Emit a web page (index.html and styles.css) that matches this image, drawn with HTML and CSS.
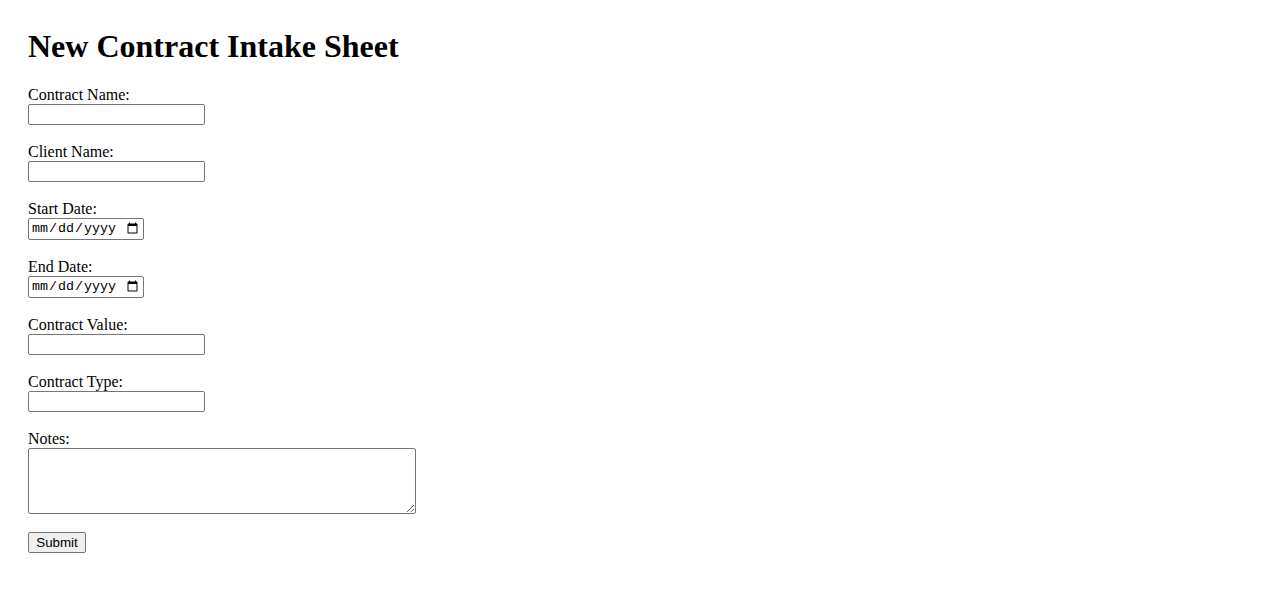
FILE: index.html
```html
<!DOCTYPE html>
<html lang="en">
<head>
<meta charset="utf-8">
<title>New Contract Intake Sheet</title>
<link rel="stylesheet" href="styles.css">
</head>
<body>
<div class="page">
<h1 class="title">New Contract Intake Sheet</h1>
<form class="intake">
<label class="lbl" for="cname">Contract Name:</label><br>
<input class="txt" type="text" id="cname"><br><br>
<label class="lbl" for="client">Client Name:</label><br>
<input class="txt" type="text" id="client"><br><br>
<label class="lbl" for="start">Start Date:</label><br>
<input class="date" type="date" id="start"><br><br>
<label class="lbl" for="end">End Date:</label><br>
<input class="date" type="date" id="end"><br><br>
<label class="lbl" for="value">Contract Value:</label><br>
<input class="txt" type="text" id="value"><br><br>
<label class="lbl" for="type">Contract Type:</label><br>
<input class="txt" type="text" id="type"><br><br>
<label class="lbl" for="notes">Notes:</label><br>
<textarea class="notes" id="notes"></textarea><br><br>
<button class="submit" type="submit">Submit</button>
</form>
</div>
</body>
</html>
```
FILE: styles.css
```css
html, body {
  background: #ffffff;
}
body {
  margin: 8px;
  font-family: "Liberation Serif", "Times New Roman", serif;
  font-size: 16px;
  color: #000;
}
.page {
  padding: 20px;
}
.title {
  font-size: 32px;
  font-weight: bold;
  margin: 0 0 21px 0;
}
.intake {
  margin: 0;
}
.txt {
  box-sizing: border-box;
  width: 177px;
  height: 21px;
  font-family: "Liberation Sans", Arial, sans-serif;
  font-size: 13.33px;
  border: 1px solid #767676;
  border-radius: 2px;
  padding: 1px 2px;
  margin: 0;
}
.date {
  box-sizing: border-box;
  width: 116px;
  height: 22px;
  font-family: "Liberation Mono", "DejaVu Sans Mono", monospace;
  font-size: 13.33px;
  border: 1px solid #767676;
  border-radius: 2px;
  padding: 1px 2px;
  margin: 0;
}
.notes {
  box-sizing: border-box;
  width: 388px;
  height: 66px;
  border: 1px solid #767676;
  border-radius: 2px;
  padding: 2px;
  margin: 0;
  vertical-align: top;
}
.submit {
  box-sizing: border-box;
  width: 58px;
  height: 21px;
  font-family: "Liberation Sans", Arial, sans-serif;
  font-size: 13.33px;
  color: #000;
  background: #efefef;
  border: 1px solid #767676;
  border-radius: 2px;
  padding: 1px 6px;
  margin: 0;
}
```
